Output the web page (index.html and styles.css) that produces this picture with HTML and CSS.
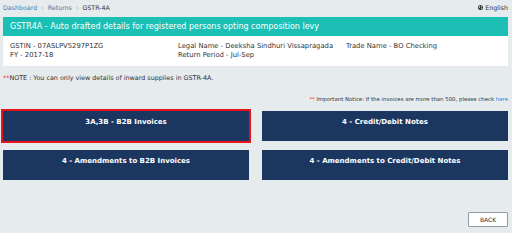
FILE: index.html
```html
<!DOCTYPE html>
<html lang="en">
<head>
<meta charset="utf-8">
<title>GSTR-4A</title>
<link rel="stylesheet" href="styles.css">
</head>
<body>
<div class="page">
  <div class="topbar">
    <div class="crumbs">
      <a class="crumb" href="#">Dashboard</a><span class="sep">›</span><a class="crumb" href="#">Returns</a><span class="sep">›</span><span class="current">GSTR-4A</span>
    </div>
    <div class="lang">
      <svg class="globe" viewBox="0 0 10 10" width="5" height="5"><circle cx="5" cy="5" r="5" fill="#2b2b2b"/><path d="M2 3.2 C3 2 4.5 2.4 4.4 3.6 C4.2 4.6 3 4.4 3.1 5.6 C3.2 6.6 2.2 6.8 1.6 5.8 Z M5.6 1.4 C6.8 1.3 8 2.2 8.4 3.4 C7.5 3.9 6.4 3.2 5.6 2.4 Z M6 5.2 C7 4.8 8.2 5.2 8 6.4 C7.6 7.8 6.2 8.4 5.8 7.2 Z" fill="#fff"/></svg>
      <span>English</span>
    </div>
  </div>

  <div class="card">
    <div class="card-head">GSTR4A - Auto drafted details for registered persons opting composition levy</div>
    <div class="card-body">
      <div class="cell">GSTIN - 07ASLPV5297P1ZG</div>
      <div class="cell">Legal Name - Deeksha Sindhuri Vissapragada</div>
      <div class="cell">Trade Name - BO Checking</div>
      <div class="cell">FY - 2017-18</div>
      <div class="cell">Return Period - Jul-Sep</div>
      <div class="cell"></div>
    </div>
  </div>

  <p class="note"><span class="ast">**</span>NOTE : You can only view details of inward supplies in GSTR-4A.</p>
  <p class="notice"><span class="ast">**</span> Important Notice: If the invoices are more than 500, please check <a class="link" href="#">here</a></p>

  <div class="tiles">
    <div class="tile active">3A,3B - B2B Invoices</div>
    <div class="tile">4 - Credit/Debit Notes</div>
    <div class="tile">4 - Amendments to B2B Invoices</div>
    <div class="tile">4 - Amendments to Credit/Debit Notes</div>
  </div>

  <div class="actions">
    <button class="back">BACK</button>
  </div>
</div>
</body>
</html>
```

FILE: styles.css
```css
* { box-sizing: border-box; }
html, body {
  margin: 0;
  padding: 0;
  background: #e6ebee;
  font-family: "DejaVu Sans", Verdana, sans-serif;
  color: #333;
}
.page {
  width: 512px;
  height: 233px;
  padding: 0 4px 0 3px;
  overflow: hidden;
}
.topbar {
  height: 17px;
  display: flex;
  justify-content: space-between;
  align-items: center;
  font-size: 6.3px;
  padding-bottom: 3px;
}
.crumbs { display: flex; align-items: center; }
.crumb { color: #4f7aa6; text-decoration: none; }
.sep { color: #9aa3ab; margin: 0 4px; }
.current { color: #333; }
.lang { display: flex; align-items: center; gap: 2px; color: #333; }
.globe { display: block; }

.card { background: #fff; }
.card-head {
  height: 19px;
  background: #1bbfb3;
  color: #fff;
  font-size: 8px;
  line-height: 19px;
  padding-left: 7px;
  white-space: nowrap;
}
.card-body {
  display: grid;
  grid-template-columns: 168px 168px 1fr;
  padding: 6px 7px 7px;
  font-size: 6.8px;
  line-height: 8.5px;
  color: #333;
}
.cell { white-space: nowrap; min-height: 8.5px; }

.note {
  margin: 8px 0 0;
  font-size: 6.4px;
  line-height: 9px;
  color: #333;
}
.ast { color: #e33; }
.notice {
  margin: 12px 0 0;
  font-size: 5.4px;
  line-height: 8px;
  text-align: right;
  color: #333;
}
.link { color: #3a7bd5; text-decoration: none; }

.tiles {
  margin-top: 8px;
  display: grid;
  grid-template-columns: 1fr 1fr;
  column-gap: 13px;
  row-gap: 9px;
}
.tile {
  height: 30px;
  background: #1b3760;
  color: #fff;
  font-weight: bold;
  font-size: 7px;
  line-height: 9px;
  padding: 7px 0 0;
  text-align: center;
  cursor: pointer;
}
.tile.active { outline: 2px solid #e8141c; }
.actions {
  margin-top: 32px;
  display: flex;
  justify-content: flex-end;
}
.back {
  width: 40px;
  height: 15px;
  background: #fff;
  border: 1px solid #8f9aa5;
  border-radius: 1px;
  font-family: "DejaVu Sans", Verdana, sans-serif;
  font-size: 6px;
  color: #333;
  padding: 0;
  margin: 0;
}
```
